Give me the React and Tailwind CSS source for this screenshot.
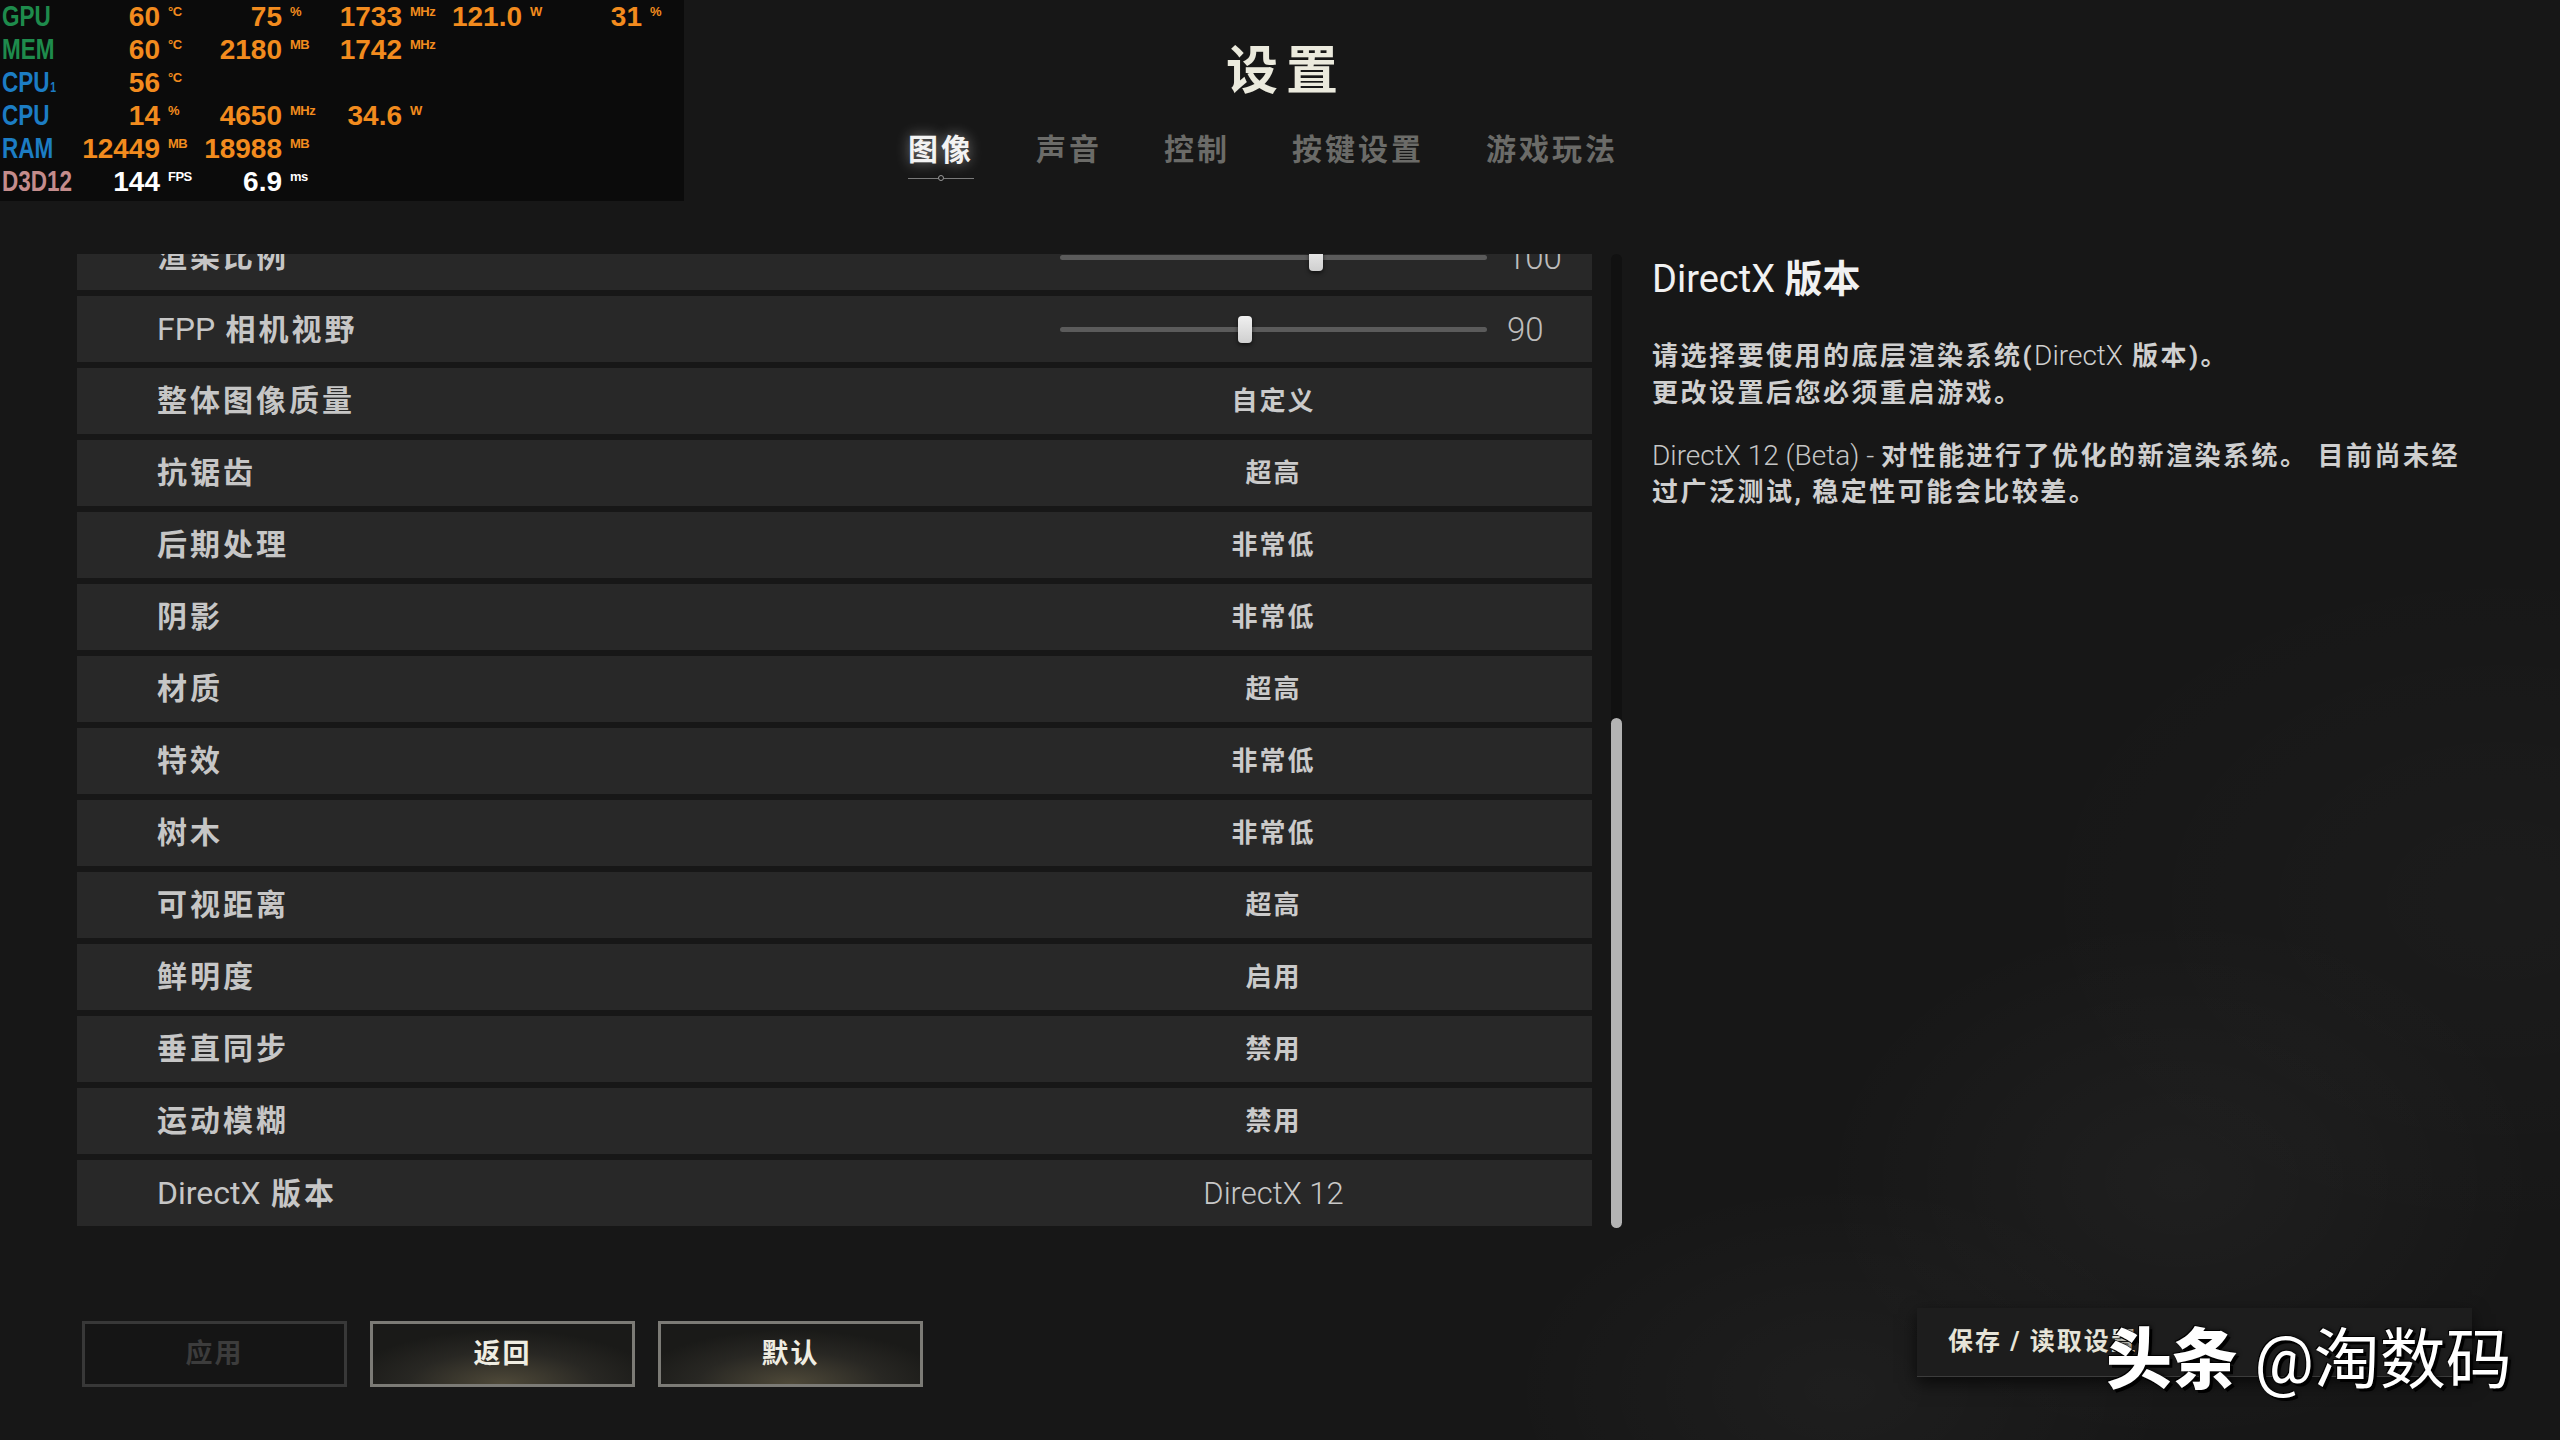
import React from 'react'

// fonts
const UI = "font-['Roboto','Noto_Sans_CJK_SC',sans-serif]"
const OSD_FONT = "font-['Liberation_Sans',sans-serif]"

const valW = ['w-[90px]', 'w-[82px]', 'w-[80px]', 'w-[82px]', 'w-[82px]']
const unitW = ['w-[40px]', 'w-[40px]', 'w-[38px]', 'w-[38px]', 'w-[38px]']

const osdRows = [
  { label: 'GPU', color: 'text-[#1e8b4c]', cells: [['60', '°C'], ['75', '%'], ['1733', 'MHz'], ['121.0', 'W'], ['31', '%']] },
  { label: 'MEM', color: 'text-[#1e8b4c]', cells: [['60', '°C'], ['2180', 'MB'], ['1742', 'MHz']] },
  { label: 'CPU', sub: '1', color: 'text-[#1c7dc4]', cells: [['56', '°C']] },
  { label: 'CPU', color: 'text-[#1c7dc4]', cells: [['14', '%'], ['4650', 'MHz'], ['34.6', 'W']] },
  { label: 'RAM', color: 'text-[#1c7dc4]', cells: [['12449', 'MB'], ['18988', 'MB']] },
  { label: 'D3D12', color: 'text-[#c48c8c]', white: true, cells: [['144', 'FPS'], ['6.9', 'ms']] },
]

const Osd = () => (
  <div className={`absolute left-0 top-0 w-[684px] h-[201px] bg-[#0b0b0b] z-10 ${OSD_FONT}`}>
    {osdRows.map((row, i) => (
      <div key={i} className="flex h-[33px] items-center">
        <div className="w-[70px] pl-[2px]">
          <div className={`inline-block origin-left scale-x-[0.75] text-[30px] font-bold leading-none whitespace-nowrap ${row.color}`}>
            {row.label}
            {row.sub && <span className="text-[14px] ml-[1px]">{row.sub}</span>}
          </div>
        </div>
        {row.cells.map((c, j) => (
          <React.Fragment key={j}>
            <div className={`${valW[j]} text-right text-[28px] font-bold leading-none ${row.white ? 'text-white' : 'text-[#f28b1e]'}`}>
              {c[0]}
            </div>
            <div className={`${unitW[j]} self-start mt-[5px] pl-[8px] text-[13px] font-bold leading-none tracking-[-0.5px] ${row.white ? 'text-white' : 'text-[#f28b1e]'}`}>
              {c[1]}
            </div>
          </React.Fragment>
        ))}
      </div>
    ))}
  </div>
)

const Latin = ({ children, className = '' }) => (
  <span className={`font-light tracking-normal ${className}`}>{children}</span>
)

const rows = [
  { label: '渲染比例', slider: 249, num: '100' },
  { label: <><Latin className="text-[32px] font-normal">FPP</Latin> 相机视野</>, slider: 178, num: '90' },
  { label: '整体图像质量', value: '自定义' },
  { label: '抗锯齿', value: '超高' },
  { label: '后期处理', value: '非常低' },
  { label: '阴影', value: '非常低' },
  { label: '材质', value: '超高' },
  { label: '特效', value: '非常低' },
  { label: '树木', value: '非常低' },
  { label: '可视距离', value: '超高' },
  { label: '鲜明度', value: '启用' },
  { label: '垂直同步', value: '禁用' },
  { label: '运动模糊', value: '禁用' },
  { label: <><Latin className="text-[32px] font-normal">DirectX</Latin> 版本</>, value: 'DirectX 12', latin: true },
]

const Slider = ({ pos }) => (
  <div className="relative w-[427px] h-[5px] rounded-full bg-[#5b5b5b]">
    <div
      className="absolute top-[-11px] w-[14px] h-[27px] rounded-[4px] bg-gradient-to-b from-[#f0f0f0] to-[#cfcfcf] shadow-[0_2px_4px_rgba(0,0,0,0.6)]"
      style={{ left: `${pos}px` }}
    />
  </div>
)

const SettingRow = ({ row }) => (
  <div className="flex items-center h-[66px] shrink-0 bg-[#282828]">
    <div className="w-[983px] pl-[80px] text-[30px] font-bold tracking-[3px] text-[#c6c6c6] leading-none">
      {row.label}
    </div>
    {row.slider !== undefined ? (
      <>
        <Slider pos={row.slider} />
        <div className="pl-[20px] text-[33px] font-light text-[#bdbdbd] leading-none">{row.num}</div>
      </>
    ) : (
      <div className="w-[427px] text-center leading-none">
        {row.latin ? (
          <span className="text-[31px] font-light text-[#c8c8c8]">{row.value}</span>
        ) : (
          <span className="text-[26px] font-bold tracking-[2px] text-[#cacaca]">{row.value}</span>
        )}
      </div>
    )}
  </div>
)

const tabs = ['图像', '声音', '控制', '按键设置', '游戏玩法']

const Button = ({ children, disabled }) => (
  <div
    className={`flex items-center justify-center w-[265px] h-[66px] border-[3px] text-[27px] font-bold tracking-[2px] ${
      disabled
        ? 'border-[#383838] bg-[#151515] text-[#3c3c3c]'
        : 'border-[#7c7b76] bg-[radial-gradient(ellipse_60%_90%_at_50%_100%,rgba(125,115,85,0.55)_0%,rgba(40,39,35,1)_60%,rgba(26,26,24,1)_100%)] text-[#efede2]'
    }`}
  >
    {children}
  </div>
)

export default function App() {
  return (
    <div className={`relative w-[2560px] h-[1440px] overflow-hidden bg-[#171717] ${UI}`}>
      {/* smoky background */}
      <div className="pointer-events-none absolute inset-0 bg-[radial-gradient(ellipse_520px_380px_at_2180px_1180px,rgba(255,255,255,0.035),transparent_70%),radial-gradient(ellipse_480px_300px_at_1840px_1390px,rgba(255,255,255,0.03),transparent_70%),radial-gradient(ellipse_700px_500px_at_2500px_900px,rgba(255,255,255,0.02),transparent_70%)]" />

      <Osd />

      <div className="relative flex flex-col">
        {/* header */}
        <div className="h-[254px] flex flex-col items-center">
          <div className="mt-[42px] text-[52px] leading-[60px] font-bold tracking-[8px] text-[#ebeadd] pl-[12px]">
            设置
          </div>
          <div className="mt-[28px] mr-[34px] flex gap-[62px]">
            {tabs.map((t, i) => (
              <div key={t} className="flex flex-col items-center">
                <div
                  className={`text-[30px] leading-[40px] font-bold tracking-[3px] ${
                    i === 0
                      ? 'text-[#f3f3f3] [text-shadow:0_0_14px_rgba(255,255,255,0.45)]'
                      : 'text-[#6b6b68]'
                  }`}
                >
                  {t}
                </div>
                {i === 0 && (
                  <div className="mt-[5px] flex items-center w-[66px]">
                    <div className="flex-1 h-px bg-[#7a7a7a]" />
                    <div className="w-[6px] h-[6px] rounded-full border border-[#9a9a9a]" />
                    <div className="flex-1 h-px bg-[#7a7a7a]" />
                  </div>
                )}
              </div>
            ))}
          </div>
        </div>

        {/* main */}
        <div className="flex h-[974px]">
          <div className="ml-[77px] w-[1515px] h-[974px] overflow-hidden">
            <div className="mt-[-30px] flex flex-col gap-[6px]">
              {rows.map((r, i) => (
                <SettingRow key={i} row={r} />
              ))}
            </div>
          </div>

          <div className="ml-[19px] w-[11px] h-[974px] bg-[#111111] rounded-full">
            <div className="mt-[464px] h-[510px] rounded-full bg-[#b3b3b3]" />
          </div>

          <div className="ml-[30px] pt-[3px]">
            <div className="text-[38px] leading-[44px] text-[#f1f1f1]">
              <span className="font-normal">DirectX</span> <span className="font-bold">版本</span>
            </div>
            <div className="mt-[36px] text-[26px] leading-[37px] font-bold tracking-[2.5px] text-[#cfcfcf]">
              请选择要使用的底层渲染系统(<Latin className="text-[28px]">DirectX</Latin> 版本)。
              <br />
              更改设置后您必须重启游戏。
            </div>
            <div className="mt-[26px] text-[26px] leading-[36px] font-bold tracking-[2.5px] text-[#cfcfcf]">
              <Latin className="text-[28px] text-[#c6c6c6]">DirectX 12 (Beta) - </Latin>对性能进行了优化的新渲染系统。 目前尚未经
              <br />
              过广泛测试, 稳定性可能会比较差。
            </div>
          </div>
        </div>

        {/* bottom bar */}
        <div className="mt-[80px] flex items-start">
          <div className="ml-[82px] mt-[13px] flex gap-[23px]">
            <Button disabled>应用</Button>
            <Button>返回</Button>
            <Button>默认</Button>
          </div>
          <div className="ml-auto mr-[88px] w-[555px] h-[69px] flex items-center pl-[31px] bg-[#1d1d1d] border-b border-[#3c3c3c] shadow-[0_6px_16px_rgba(0,0,0,0.65)]">
            <span className="text-[25px] font-bold tracking-[2px] text-[#e6e4d8]">保存 / 读取设置</span>
          </div>
        </div>
      </div>

      {/* watermark */}
      <div className="absolute left-[2106px] top-[1318px] text-[66px] leading-[86px] text-white whitespace-nowrap [text-shadow:3px_3px_0_#000,-1px_-1px_0_#000,2px_0_4px_rgba(0,0,0,0.9)]">
        <span className="font-black">头条</span> <span className="font-normal">@淘数码</span>
      </div>
    </div>
  )
}
